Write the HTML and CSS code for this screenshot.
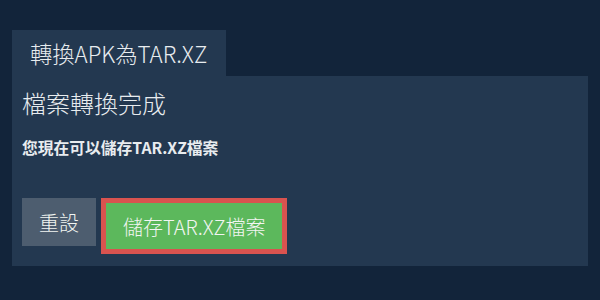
FILE: index.html
```html
<!DOCTYPE html>
<html lang="zh-Hant">
<head>
<meta charset="utf-8">
<link rel="stylesheet" href="styles.css">
</head>
<body>
<div class="wrap">
  <div class="tab">轉換APK為TAR.XZ</div>
  <div class="panel">
    <h2 class="title">檔案轉換完成</h2>
    <p class="msg">您現在可以儲存TAR.XZ檔案</p>
    <div class="actions">
      <button class="btn reset">重設</button>
      <button class="btn save">儲存TAR.XZ檔案</button>
    </div>
  </div>
</div>
</body>
</html>
```
FILE: styles.css
```css
html, body {
  margin: 0;
  padding: 0;
  background: #12243a;
  font-family: "Noto Sans CJK TC", "Noto Sans", sans-serif;
  color: #e8ecef;
}
.wrap {
  padding: 30px 12px 0 12px;
}
.tab {
  display: inline-block;
  background: #233850;
  height: 46px;
  line-height: 46px;
  padding: 0 19px 0 18px;
  font-size: 22.3px;
  font-weight: 300;
}
.panel {
  background: #233850;
  height: 190px;
  box-sizing: border-box;
  padding: 10px 10px 0 10px;
}
.title {
  margin: 0;
  font-size: 24px;
  font-weight: 300;
  line-height: 34px;
}
.msg {
  margin: 17px 0 0 0;
  font-size: 15.75px;
  font-weight: 700;
  line-height: 22px;
}
.actions {
  display: flex;
  align-items: flex-start;
  gap: 5px;
  margin-top: 39px;
}
.btn {
  font-family: inherit;
  font-size: 20px;
  font-weight: 300;
  color: #f2f5f2;
  border: none;
  margin: 0;
  cursor: pointer;
}
.reset {
  background: #4d5d6f;
  height: 48px;
  padding: 0 17px;
}
.save {
  background: #5cb85c;
  border: 5px solid #d9534f;
  height: 56px;
  padding: 0 17px;
}
```
